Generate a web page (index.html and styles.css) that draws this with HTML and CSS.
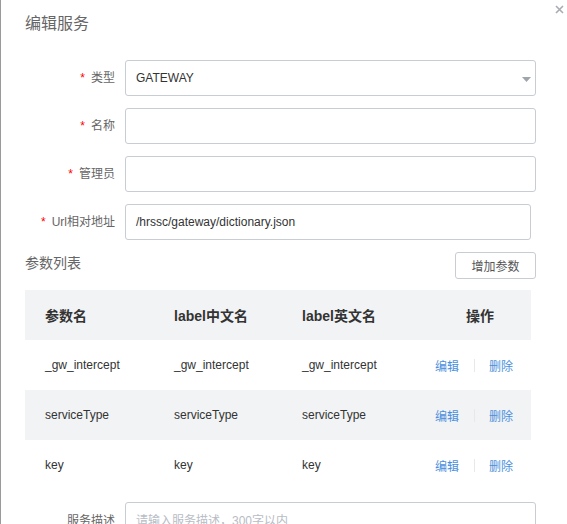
FILE: index.html
```html
<!DOCTYPE html>
<html lang="zh-CN">
<head>
<meta charset="utf-8">
<title>编辑服务</title>
<link rel="stylesheet" href="styles.css">
</head>
<body>
<div class="page">
  <div class="edge-mark"></div>
  <button class="close" aria-label="关闭">
    <svg width="9" height="9" viewBox="0 0 9 9"><path d="M1 1L8 8M8 1L1 8" stroke="#a8abb2" stroke-width="1.6" fill="none"/></svg>
  </button>
  <div class="dialog-title">编辑服务</div>

  <div class="form">
    <div class="form-row">
      <label class="form-label"><span class="req">*</span>类型</label>
      <div class="control select">
        <span class="value">GATEWAY</span>
        <svg class="caret" width="9" height="5" viewBox="0 0 9 5"><path d="M0 0H9L4.5 5Z" fill="#a0a4ab"/></svg>
      </div>
    </div>
    <div class="form-row">
      <label class="form-label"><span class="req">*</span>名称</label>
      <div class="control"></div>
    </div>
    <div class="form-row">
      <label class="form-label"><span class="req">*</span>管理员</label>
      <div class="control"></div>
    </div>
    <div class="form-row">
      <label class="form-label"><span class="req">*</span>Url相对地址</label>
      <div class="control narrow"><span class="value">/hrssc/gateway/dictionary.json</span></div>
    </div>
  </div>

  <div class="params-head">
    <span class="params-title">参数列表</span>
    <button class="btn">增加参数</button>
  </div>

  <div class="table">
    <div class="tr th">
      <div class="c1">参数名</div>
      <div class="c2">label中文名</div>
      <div class="c3">label英文名</div>
      <div class="c4 op-head">操作</div>
    </div>
    <div class="tr">
      <div class="c1">_gw_intercept</div>
      <div class="c2">_gw_intercept</div>
      <div class="c3">_gw_intercept</div>
      <div class="c4 ops"><a>编辑</a><span class="sep"></span><a>删除</a></div>
    </div>
    <div class="tr striped">
      <div class="c1">serviceType</div>
      <div class="c2">serviceType</div>
      <div class="c3">serviceType</div>
      <div class="c4 ops"><a>编辑</a><span class="sep"></span><a>删除</a></div>
    </div>
    <div class="tr">
      <div class="c1">key</div>
      <div class="c2">key</div>
      <div class="c3">key</div>
      <div class="c4 ops"><a>编辑</a><span class="sep"></span><a>删除</a></div>
    </div>
  </div>

  <div class="form-row desc-row">
    <label class="form-label desc-label">服务描述</label>
    <div class="control textarea"><span class="placeholder">请输入服务描述，300字以内</span></div>
  </div>
</div>
</body>
</html>
```

FILE: styles.css
```css
html, body {
  margin: 0;
  padding: 0;
  background: #fff;
}
body {
  font-family: "Liberation Sans", "Noto Sans CJK SC", sans-serif;
  font-size: 12px;
  color: #333;
}
.page {
  position: relative;
  width: 566px;
  height: 524px;
  overflow: hidden;
  border-left: 1px solid #9a9a9a;
}
.edge-mark {
  position: absolute;
  left: -1px;
  top: 79px;
  width: 1px;
  height: 7px;
  background: #3d5566;
}
.close {
  position: absolute;
  top: 5px;
  right: 3px;
  width: 9px;
  height: 9px;
  padding: 0;
  border: 0;
  background: none;
  display: block;
}
.close svg { display: block; }
.dialog-title {
  padding: 14px 0 0 24px;
  line-height: 20px;
  font-size: 16px;
  color: #666;
}
.form {
  margin-top: 26px;
  display: flex;
  flex-direction: column;
  gap: 12px;
}
.form-row {
  display: flex;
  align-items: center;
}
.form-label {
  width: 114px;
  box-sizing: border-box;
  text-align: right;
  color: #666;
  font-size: 12px;
  line-height: 20px;
  margin-right: 10px;
  white-space: nowrap;
}
.req {
  color: #f00;
  margin-right: 6px;
  font-size: 12px;
}
.control {
  position: relative;
  width: 411px;
  height: 36px;
  box-sizing: border-box;
  border: 1px solid #c8ccd3;
  border-radius: 3px;
  display: flex;
  align-items: center;
  padding: 0 10px;
  color: #333;
}
.control.narrow { width: 406px; }
.caret {
  position: absolute;
  right: 4px;
  top: 16px;
}
.params-head {
  margin-top: 12px;
  padding: 0 31px 0 24px;
  display: flex;
  justify-content: space-between;
  align-items: flex-start;
}
.params-title {
  font-size: 14px;
  line-height: 22px;
  color: #666;
}
.btn {
  width: 81px;
  height: 27px;
  box-sizing: border-box;
  border: 1px solid #c8ccd3;
  border-radius: 3px;
  background: #fff;
  font-family: inherit;
  font-size: 12px;
  color: #555;
  padding: 0;
}
.table {
  margin: 11px 0 0 24px;
  width: 506px;
}
.tr {
  display: flex;
  height: 50px;
  align-items: center;
}
.th {
  background: #f2f3f5;
  font-weight: bold;
  font-size: 14px;
  color: #333;
}
.striped { background: #f2f3f5; }
.c1 { width: 129px; padding-left: 20px; box-sizing: border-box; }
.c2 { width: 128px; padding-left: 20px; box-sizing: border-box; }
.c3 { width: 133px; padding-left: 20px; box-sizing: border-box; }
.c4 { width: 116px; box-sizing: border-box; }
.op-head { padding-left: 51px; }
.ops {
  padding-left: 20px;
  display: flex;
  align-items: center;
}
.ops a {
  color: #4a8fdc;
  cursor: pointer;
}
.sep {
  width: 1px;
  height: 13px;
  background: #e6e8eb;
  margin: 0 14px 0 15px;
}
.desc-row {
  margin-top: 12px;
  align-items: flex-start;
}
.desc-label {
  padding-top: 9px;
}
.textarea {
  height: 70px;
  align-items: flex-start;
  padding-top: 8px;
  line-height: 20px;
}
.placeholder { color: #b8bcc4; }
```
